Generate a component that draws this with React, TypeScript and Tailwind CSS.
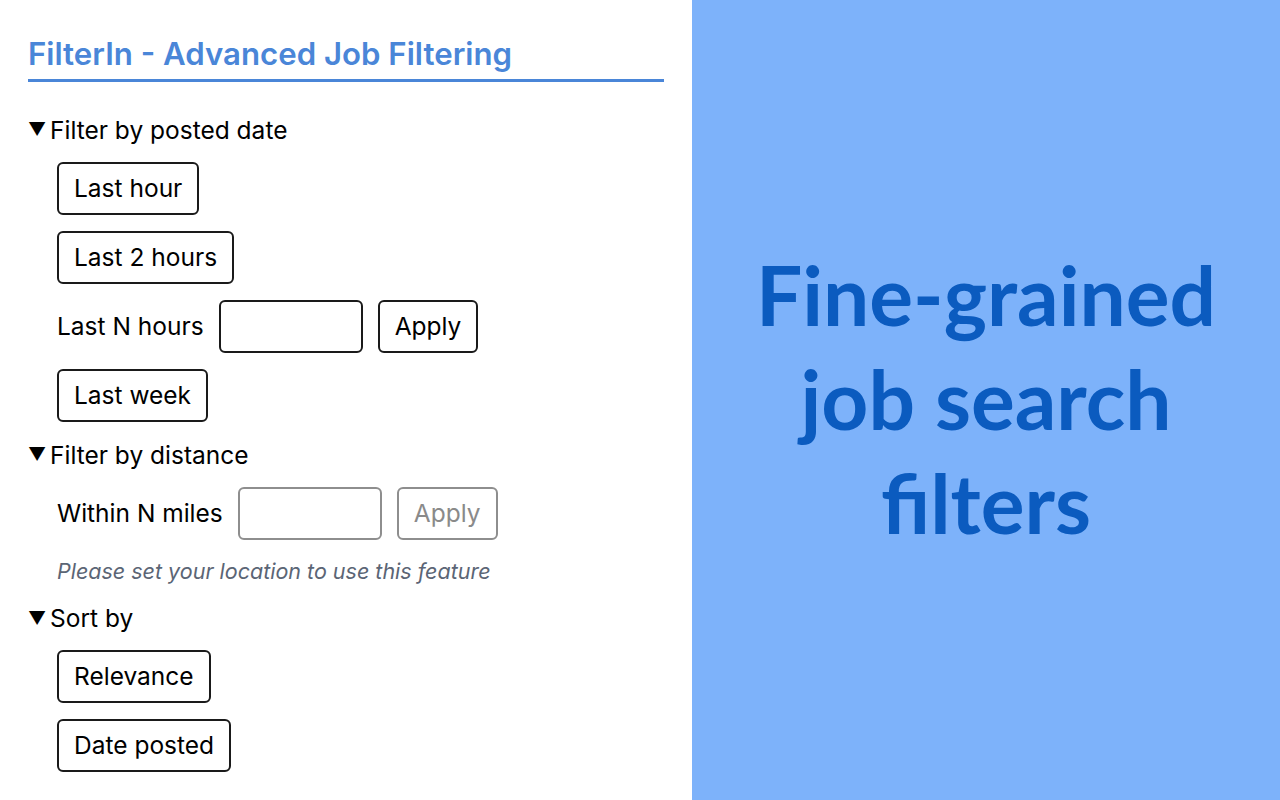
import React from "react";

const btn =
  "h-[53px] px-[15px] border-2 border-[#1a1a1a] rounded-[6px] bg-white text-[24.5px] text-black leading-none flex items-center";

function Summary({ children }: { children: React.ReactNode }) {
  return (
    <div className="flex items-center text-[24.5px] text-black leading-none h-[30px]">
      <span className="text-[18px] mr-[4px] w-[18px]">▼</span>
      <span>{children}</span>
    </div>
  );
}

export default function App() {
  return (
    <div className="w-[1280px] h-[800px] flex overflow-hidden bg-white" style={{ fontFamily: "Inter, 'Noto Sans', sans-serif" }}>
      <div className="w-[692px] h-full pl-[28px] pr-[28px] pt-[36px] flex flex-col">
        <div className="text-[31.2px] font-semibold text-[#4a86d8] leading-none pb-[9px] border-b-[3px] border-[#4a86d8] h-[46px] flex items-end">
          FilterIn - Advanced Job Filtering
        </div>
        <div className="mt-[33px]">
          <Summary>Filter by posted date</Summary>
          <div className="pl-[29px] mt-[17px] flex flex-col gap-[16px]">
            <div className="flex">
              <button className={btn}>Last hour</button>
            </div>
            <div className="flex">
              <button className={btn}>Last 2 hours</button>
            </div>
            <div className="flex items-center">
              <span className="text-[24.5px] text-black mr-[15px]">Last N hours</span>
              <div className="w-[144px] h-[53px] border-2 border-[#1a1a1a] rounded-[6px] mr-[15px]" />
              <button className={btn}>Apply</button>
            </div>
            <div className="flex">
              <button className={btn}>Last week</button>
            </div>
          </div>
        </div>
        <div className="mt-[18px]">
          <Summary>Filter by distance</Summary>
          <div className="pl-[29px] mt-[17px]">
            <div className="flex items-center">
              <span className="text-[24.5px] text-black mr-[15px]">Within N miles</span>
              <div className="w-[144px] h-[53px] border-2 border-[#8e8e8e] rounded-[6px] mr-[15px]" />
              <button className="h-[53px] px-[15px] border-2 border-[#8e8e8e] rounded-[6px] bg-white text-[24.5px] text-[#8a8a8a] leading-none flex items-center">
                Apply
              </button>
            </div>
            <div className="mt-[21px] text-[21.5px] italic text-[#5b6575] leading-none">
              Please set your location to use this feature
            </div>
          </div>
        </div>
        <div className="mt-[21px]">
          <Summary>Sort by</Summary>
          <div className="pl-[29px] mt-[16px] flex flex-col gap-[16px]">
            <div className="flex">
              <button className={btn}>Relevance</button>
            </div>
            <div className="flex">
              <button className={btn}>Date posted</button>
            </div>
          </div>
        </div>
      </div>
      <div className="flex-1 h-full bg-[#7db2fa] flex items-center justify-center">
        <div
          className="text-[82px] font-bold text-[#0b5bbf] text-center leading-[104px] pb-[5px]"
          style={{ fontFamily: "Lato, sans-serif" }}
        >
          Fine-grained
          <br />
          job search
          <br />
          filters
        </div>
      </div>
    </div>
  );
}
